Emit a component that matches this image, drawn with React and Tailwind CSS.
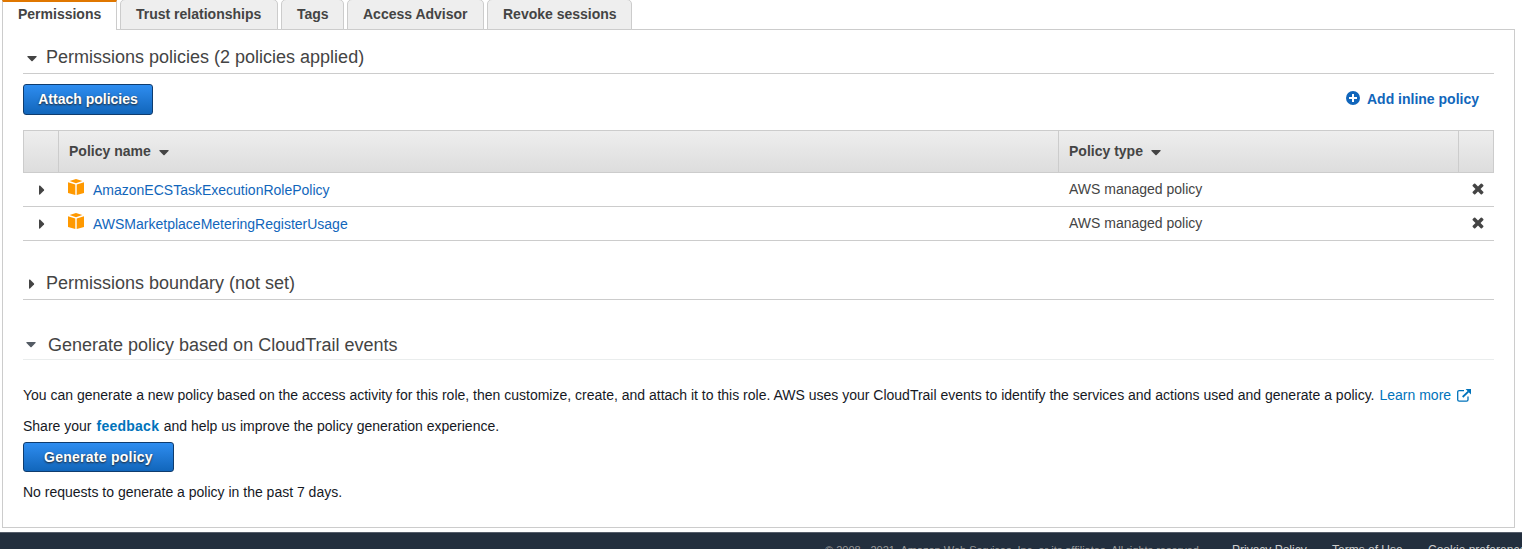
const tabs = [
  { label: 'Trust relationships', width: 'w-[158px]' },
  { label: 'Tags', width: 'w-[63px]' },
  { label: 'Access Advisor', width: 'w-[137px]' },
  { label: 'Revoke sessions', width: 'w-[145px]' },
];

const policies = ['AmazonECSTaskExecutionRolePolicy', 'AWSMarketplaceMeteringRegisterUsage'];

function CaretDown({ className = 'fill-[#444]' }) {
  return (
    <svg width="10" height="6" viewBox="0 0 10 6" className={`block shrink-0 ${className}`}>
      <path d="M1 0H9Q10.2 0.2 9.5 1L5.6 5.1Q5 5.6 4.4 5.1L0.5 1Q-0.2 0.2 1 0Z" />
    </svg>
  );
}

function CaretRight({ className = '' }) {
  return (
    <svg width="6" height="10" viewBox="0 0 6 10" className={`block shrink-0 fill-[#444] ${className}`}>
      <path d="M0 1Q0.2 0 1 0.6L5 4.5Q5.4 5 5 5.5L1 9.4Q0.2 10 0 9Z" />
    </svg>
  );
}

function PolicyBox() {
  return (
    <svg width="16" height="16" viewBox="0 0 16 16" className="block shrink-0 fill-[#f90]">
      <path d="M8 0L14.4 2.1L8 4.2L1.6 2.1Z" />
      <path d="M0 3.2L7.3 5.4V16L0 14Z" />
      <path d="M16 3.2L8.7 5.4V16L16 14Z" />
    </svg>
  );
}

function Cross() {
  return (
    <svg width="12" height="12" viewBox="56 248 1296 1296" className="block fill-[#444]">
      <path d="M1298 1322q0 40-28 68l-136 136q-28 28-68 28t-68-28l-294-294-294 294q-28 28-68 28t-68-28l-136-136q-28-28-28-68t28-68l294-294-294-294q-28-28-28-68t28-68l136-136q28-28 68-28t68 28l294 294 294-294q28-28 68-28t68 28l136 136q28 28 28 68t-28 68l-294 294 294 294q28 28 28 68z" transform="translate(0 -64)" />
    </svg>
  );
}

function PlusCircle() {
  return (
    <svg width="14" height="14" viewBox="0 0 14 14" className="block">
      <circle cx="7" cy="7" r="7" className="fill-[#1166bb]" />
      <path d="M7 3V11M3 7H11" className="stroke-white stroke-2" />
    </svg>
  );
}

function External() {
  return (
    <svg width="14" height="13" viewBox="0 0 14 13" fill="none" className="block stroke-[#0073bb]">
      <path d="M7 1.6H2.2Q0.7 1.6 0.7 3V10.8Q0.7 12.2 2.2 12.2H9.6Q11 12.2 11 10.8V7.5" strokeWidth="1.3" />
      <path d="M5.7 8L11.5 2.3" strokeWidth="1.8" />
      <path d="M8.6 0H14V5.4Z" stroke="none" className="fill-[#0073bb]" />
    </svg>
  );
}

export default function App() {
  return (
    <div className="flex h-[549px] w-[1522px] flex-col overflow-hidden bg-white font-['Liberation_Sans',Arial,sans-serif] text-sm leading-4 text-[#444]">
      <nav className="z-10 -mb-px flex h-[30px] shrink-0 gap-[3px] pl-[2px] font-bold whitespace-nowrap">
        <div className="h-[30px] w-[115px] border-x border-t-2 border-x-[#ccc] border-t-[#e07700] bg-white pt-1 pl-[15px]">Permissions</div>
        {tabs.map((tab) => (
          <div key={tab.label} className={`-mt-px h-[31px] rounded-t-[5px] border border-[#ccc] bg-[#eee] pt-[6px] pl-[15px] ${tab.width}`}>
            {tab.label}
          </div>
        ))}
      </nav>

      <main className="ml-[2px] flex h-[499px] w-[1513px] shrink-0 flex-col border border-[#ccc] px-5">
        <h2 className="flex h-11 shrink-0 border-b border-[#ccc] pt-[17px] pl-1 text-lg leading-5">
          <CaretDown className="mt-[9px] mr-[9px] fill-[#444]" />
          Permissions policies (2 policies applied)
        </h2>
        <div className="mt-[10px] flex h-[31px] shrink-0 items-start justify-between">
          <button className="h-[31px] w-[130px] rounded-[3px] border border-[#0f3c6e] bg-linear-to-b from-[#2e8df0] to-[#1166bb] pb-px font-bold text-white [text-shadow:0_1px_2px_#222]">
            Attach policies
          </button>
          <a className="flex gap-[7px] pt-[7px] pr-[15px] font-bold text-[#1166bb]">
            <PlusCircle />
            Add inline policy
          </a>
        </div>

        <div className="mt-[15px] shrink-0">
          <div className="grid h-[43px] grid-cols-[35px_1000px_400px_34px] border border-[#ccc] bg-linear-to-b from-[#eee] to-[#ddd] font-bold">
            <div className="border-r border-[#ccc]" />
            <div className="flex border-r border-[#ccc] pt-3 pl-[10px]">
              Policy name
              <CaretDown className="mt-[7px] ml-[8px] fill-[#444]" />
            </div>
            <div className="flex border-r border-[#ccc] pt-3 pl-[10px]">
              Policy type
              <CaretDown className="mt-[7px] ml-[8px] fill-[#444]" />
            </div>
            <div />
          </div>
          {policies.map((name) => (
            <div key={name} className="grid h-[34px] grid-cols-[36px_1000px_400px_35px] border-b border-[#ccc]">
              <CaretRight className="mt-3 ml-[16px]" />
              <div className="flex gap-[9px] pt-[6px] pl-[9px] text-[#1166bb]">
                <PolicyBox />
                <span className="pt-[3px]">{name}</span>
              </div>
              <div className="pt-2 pl-[10px]">AWS managed policy</div>
              <div className="pt-[10px] pl-[13px]">
                <Cross />
              </div>
            </div>
          ))}
        </div>

        <h2 className="flex h-[59px] shrink-0 border-b border-[#ccc] pt-8 pl-[6px] text-lg leading-5">
          <CaretRight className="mt-[6px] mr-[11px]" />
          Permissions boundary (not set)
        </h2>
        <h2 className="flex h-[60px] shrink-0 border-b border-[#eaeded] pt-[35px] pl-[3px] text-lg leading-5">
          <CaretDown className="mt-[7px] mr-3 fill-[#545b64]" />
          Generate policy based on CloudTrail events
        </h2>

        <div className="flex flex-col items-start whitespace-nowrap text-[#16191f]">
          <p className="mt-[27px] flex">
            You can generate a new policy based on the access activity for this role, then customize, create, and attach it to this role. AWS uses your CloudTrail events to identify the services and actions used and generate a policy.
            <a className="ml-[5px] flex gap-[6px] text-[#0073bb]">
              Learn more
              <span className="pt-[2px]">
                <External />
              </span>
            </a>
          </p>
          <p className="mt-[15px] flex">
            Share your
            <a className="mr-[4.5px] ml-[5px] font-bold tracking-[0.25px] text-[#0073bb]">feedback</a>
            and help us improve the policy generation experience.
          </p>
          <button className="mt-2 h-[30px] w-[151px] rounded-[3px] border border-[#0f3c6e] bg-linear-to-b from-[#2e8df0] to-[#1166bb] font-bold tracking-[0.25px] text-white [text-shadow:0_1px_2px_#222]">
            Generate policy
          </button>
          <p className="mt-3">No requests to generate a policy in the past 7 days.</p>
        </div>
      </main>

      <footer className="mt-1 flex h-[40px] shrink-0 border-t border-[#565e6b] bg-[#232f3e] pt-[10px] pl-[825px] whitespace-nowrap text-[#ccc]">
        <span className="w-[407px] shrink-0 pt-px text-[11px] leading-3 text-[#999]">© 2008 - 2021, Amazon Web Services, Inc. or its affiliates. All rights reserved.</span>
        <a className="w-[100px] shrink-0 text-xs leading-[14px]">Privacy Policy</a>
        <a className="w-[96px] shrink-0 text-xs leading-[14px]">Terms of Use</a>
        <a className="shrink-0 text-xs leading-[14px]">Cookie preferences</a>
      </footer>
    </div>
  );
}
